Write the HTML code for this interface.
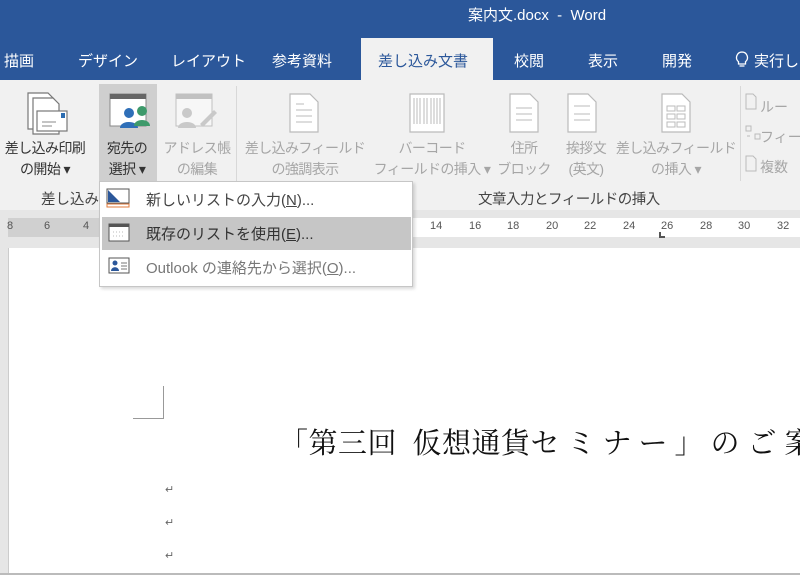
<!DOCTYPE html>
<html><head><meta charset="utf-8"><style>
*{margin:0;padding:0;box-sizing:border-box}
body{width:800px;height:575px;overflow:hidden;position:relative;background:#fff;font-family:"Liberation Sans","Noto Sans CJK JP",sans-serif}
.a{position:absolute;white-space:nowrap}
.tab{position:absolute;top:50px;color:#fff;font-size:15px;white-space:nowrap}
.rl{position:absolute;font-size:14px;letter-spacing:-0.6px;line-height:21px;text-align:center;white-space:nowrap;color:#a6a6a6;transform:translateX(-50%)}
.en{color:#333}
.num{position:absolute;top:220px;font-size:11px;color:#555}
.mi{position:absolute;left:146px;font-size:15px;color:#444}
</style></head><body>
<div class="a" style="left:0;top:0;width:800px;height:80px;background:#2b579a"></div>
<div class="a" style="left:468px;top:4px;color:#fff;font-size:15px">案内文.docx&nbsp; - &nbsp;Word</div>
<div class="tab" style="left:4px">描画</div>
<div class="tab" style="left:78px">デザイン</div>
<div class="tab" style="left:171px">レイアウト</div>
<div class="tab" style="left:272px">参考資料</div>
<div class="a" style="left:361px;top:38px;width:132px;height:44px;background:#f1f1f1"></div>
<div class="tab" style="left:378px;color:#2b579a">差し込み文書</div>
<div class="tab" style="left:514px">校閲</div>
<div class="tab" style="left:588px">表示</div>
<div class="tab" style="left:662px">開発</div>
<svg class="a" style="left:735px;top:51px" width="14" height="18"><path d="M7 1a5.5 5.5 0 0 0-3.5 9.7V13h7v-2.3A5.5 5.5 0 0 0 7 1zM4.5 15h5" fill="none" stroke="#fff" stroke-width="1.3"/></svg>
<div class="a" style="left:754px;top:50px;width:46px;overflow:hidden;color:#fff;font-size:15px">実行し</div>
<div class="a" style="left:0;top:80px;width:800px;height:130px;background:#f1f1f1"></div>
<div class="a" style="left:99px;top:84px;width:58px;height:98px;background:#cfcfcf"></div>
<div class="a" style="left:236px;top:86px;width:1px;height:118px;background:#d8d8d8"></div>
<div class="a" style="left:740px;top:86px;width:1px;height:95px;background:#d8d8d8"></div>
<svg class="a" style="left:0;top:84px" width="800" height="100">
<g fill="#fff" stroke="#777" stroke-width="1.2">
<path d="M28 9h20l6 6v30H28z"/><path d="M33 14h20l6 6v30H33z"/><rect x="37" y="27" width="30" height="20"/></g>
<rect x="61" y="29" width="4" height="5" fill="#2b6cb0"/><path d="M42 38h14M42 42h10" stroke="#888"/>
<rect x="110" y="10" width="36" height="32" fill="#fff" stroke="#888"/><rect x="110" y="10" width="36" height="5" fill="#666"/>
<circle cx="129" cy="29" r="5" fill="#2f6fb8"/><path d="M120 44c0-8 18-8 18 0z" fill="#2f6fb8"/>
<circle cx="142" cy="27" r="5" fill="#3e9a6b"/><path d="M134 42c0-8 16-8 16 0z" fill="#3e9a6b"/>
<g opacity=".45"><rect x="176" y="10" width="36" height="32" fill="#fff" stroke="#888"/><rect x="176" y="10" width="36" height="5" fill="#888"/><circle cx="187" cy="29" r="5" fill="#999"/><path d="M178 44c0-8 18-8 18 0z" fill="#999"/><path d="M200 40l14-14 3 3-14 14z" fill="#999"/></g>
<g fill="#fff" stroke="#bbb" stroke-width="1.2">
<path d="M290 10h20l8 8v30h-28z"/><path d="M410 10h34v38h-34z"/><path d="M510 10h20l8 8v30h-28z"/><path d="M568 10h20l8 8v30h-28z"/><path d="M662 10h20l8 8v30h-28z"/></g>
<path d="M296 20h8M296 26h16M296 32h16M296 38h16M516 24h16M516 30h16M516 36h16M574 22h16M574 30h16M574 36h16M414 14v26M417 14v26M420 14v26M424 14v26M427 14v26M431 14v26M434 14v26M437 14v26M440 14v26" stroke="#bbb"/>
<g fill="none" stroke="#bbb"><rect x="667" y="22" width="8" height="5"/><rect x="677" y="22" width="8" height="5"/><rect x="667" y="30" width="8" height="5"/><rect x="677" y="30" width="8" height="5"/><rect x="667" y="38" width="8" height="5"/><rect x="677" y="38" width="8" height="5"/>
<path d="M746 10h7l3 3v12h-10z"/><path d="M746 42h5v5h-5zM755 50h5v5h-5zM750 52l-3 0"/><path d="M746 72h7l3 3v12h-10z"/></g>
</svg>
<div class="a" style="left:760px;top:92px;width:40px;overflow:hidden;font-size:14px;color:#a6a6a6;line-height:30px">ルー<br>フィー<br>複数</div>
<div class="rl en" style="left:45px;top:138px">差し込み印刷<br>の開始 ▾</div>
<div class="rl en" style="left:127px;top:138px">宛先の<br>選択 ▾</div>
<div class="rl" style="left:197px;top:138px">アドレス帳<br>の編集</div>
<div class="rl" style="left:305px;top:138px">差し込みフィールド<br>の強調表示</div>
<div class="rl" style="left:432px;top:138px">バーコード<br>フィールドの挿入 ▾</div>
<div class="rl" style="left:524px;top:138px">住所<br>ブロック</div>
<div class="rl" style="left:586px;top:138px">挨拶文<br>(英文)</div>
<div class="rl" style="left:676px;top:138px">差し込みフィールド<br>の挿入 ▾</div>
<div class="a" style="left:41px;top:188px;font-size:14.5px;color:#444">差し込み印刷</div>
<div class="a" style="left:478px;top:188px;font-size:14.5px;letter-spacing:-0.5px;color:#444">文章入力とフィールドの挿入</div>
<div class="a" style="left:0;top:210px;width:800px;height:38px;background:#e6e6e6"></div>
<div class="a" style="left:8px;top:218px;width:792px;height:19px;background:#fff"></div>
<div class="a" style="left:8px;top:218px;width:120px;height:19px;background:#d0d0d0"></div>
<div class="num" style="left:7px">8</div><div class="num" style="left:44px">6</div><div class="num" style="left:83px">4</div>
<div class="num" style="left:430px">14</div><div class="num" style="left:469px">16</div><div class="num" style="left:507px">18</div><div class="num" style="left:546px">20</div><div class="num" style="left:584px">22</div><div class="num" style="left:623px">24</div><div class="num" style="left:661px">26</div><div class="num" style="left:700px">28</div><div class="num" style="left:738px">30</div><div class="num" style="left:777px">32</div>
<div class="a" style="left:659px;top:232px;width:6px;height:6px;border-left:2px solid #555;border-bottom:2px solid #555"></div>
<div class="a" style="left:0;top:248px;width:9px;height:327px;background:#e6e6e6;border-right:1px solid #ccc"></div>
<div class="a" style="left:0;top:573px;width:800px;height:2px;background:#bbb"></div>
<div class="a" style="left:133px;top:386px;width:31px;height:33px;border-right:1px solid #999;border-bottom:1px solid #999"></div>
<div class="a" style="left:279px;top:421px;width:521px;overflow:hidden;font-size:29px;color:#111;font-family:'Liberation Serif','Noto Serif CJK SC',serif;letter-spacing:0.5px">「第三回&nbsp; 仮想通貨<span style="letter-spacing:7px">セミナー」</span><span style="letter-spacing:8px">のご案</span></div>
<div class="a" style="left:165px;top:483px;font-size:11px;color:#666">↵</div>
<div class="a" style="left:165px;top:516px;font-size:11px;color:#666">↵</div>
<div class="a" style="left:165px;top:549px;font-size:11px;color:#666">↵</div>
<div class="a" style="left:99px;top:181px;width:314px;height:106px;background:#fff;border:1px solid #c6c6c6;box-shadow:2px 2px 3px rgba(0,0,0,.15)"></div>
<div class="a" style="left:102px;top:217px;width:309px;height:33px;background:#c6c6c6"></div>
<svg class="a" style="left:105px;top:186px" width="30" height="96">
<rect x="2" y="3" width="22" height="14" fill="#fff" stroke="#555"/><path d="M3 4l12 12H3z" fill="#2b579a"/><rect x="2" y="18" width="22" height="3" fill="none" stroke="#e0793a"/>
<rect x="4" y="38" width="20" height="17" fill="#fff" stroke="#555"/><rect x="4" y="38" width="20" height="3" fill="#555"/><path d="M8 46h12M8 50h12" stroke="#bbb" stroke-dasharray="1 2"/>
<rect x="4" y="72" width="20" height="15" fill="#fff" stroke="#555"/><circle cx="10" cy="77" r="2.5" fill="#2b579a"/><path d="M6 85c0-5 8-5 8 0z" fill="#2b579a"/><path d="M16 77h6M16 80h6M16 83h6" stroke="#777"/>
</svg>
<div class="mi" style="top:189px">新しいリストの入力(<u>N</u>)...</div>
<div class="mi" style="top:223px;color:#333">既存のリストを使用(<u>E</u>)...</div>
<div class="mi" style="top:257px;color:#777">Outlook の連絡先から選択(<u>O</u>)...</div>
</body></html>
